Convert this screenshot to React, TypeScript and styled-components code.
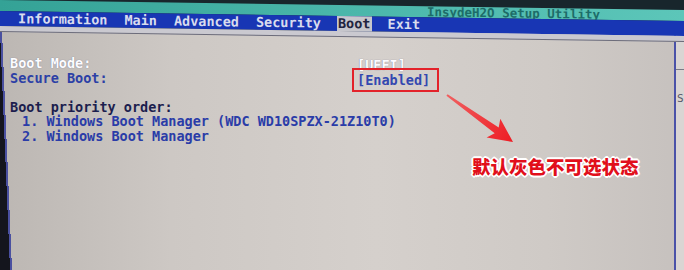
import React from 'react'
import styled, { createGlobalStyle } from 'styled-components'

const GlobalStyle = createGlobalStyle`
  html, body {
    margin: 0;
    padding: 0;
    background: #18262c;
    overflow: hidden;
  }
`

const Screen = styled.div`
  position: relative;
  width: 684px;
  height: 270px;
  display: flex;
  flex-direction: column;
  overflow: hidden;
  font-family: "DejaVu Sans Mono", "Liberation Mono", monospace;
  font-weight: bold;
`

// the photo is a bit tilted, so the header leans down to the right
const Header = styled.div`
  transform: skewY(0.84deg);
  transform-origin: left top;
  display: flex;
  flex-direction: column;
  flex-shrink: 0;
`

const TitleBand = styled.div`
  height: 11px;
  background: linear-gradient(to right, #34a296, #4ab6aa 50%, #5cc6b9);
  display: flex;
  justify-content: flex-end;
  padding-right: 84px;
`

const Title = styled.span`
  font-size: 12.5px;
  line-height: 12px;
  color: #1d6c68;
`

const MenuBar = styled.div`
  height: 15px;
  background: #1836b4;
  display: flex;
  align-items: center;
  gap: 15px;
  padding-left: 17px;
`

const MenuItem = styled.span<{ $active?: boolean }>`
  font-size: 13.5px;
  line-height: 15px;
  padding: 0 1px;
  color: ${(p) => (p.$active ? '#22243e' : '#d9dcee')};
  background: ${(p) => (p.$active ? '#c6c6cc' : 'transparent')};
`

const HeaderGap = styled.div`
  height: 5px;
  background: #cac9d0;
  border-bottom: 1px solid #6c6c7a;
`

const Body = styled.div`
  flex: 1;
  display: flex;
  background: linear-gradient(to right, #bcb7b3, #cdc8c4 25%, #d5d0cc 55%, #cfcac6 80%, #c6c1be);
`

const Main = styled.div`
  flex: 1;
  padding: 24px 0 0 10px;
  background: linear-gradient(87.6deg, #14151d 0 10px, #4a50a0 10px 12px, transparent 12px);
  font-size: 13.5px;
  line-height: 14.5px;
`

const SettingRow = styled.div`
  display: grid;
  grid-template-columns: 347px auto;
`

const whiteText = 'color: #fcfcff; text-shadow: 0 0 1px rgba(40, 44, 100, 0.55);'

const Label = styled.span<{ $tone: 'white' | 'blue' | 'navy' }>`
  color: ${(p) => (p.$tone === 'blue' ? '#2c40a6' : '#1c1e4e')};
  ${(p) => p.$tone === 'white' && whiteText}
`

const Value = styled.span<{ $tone: 'white' | 'blue'; $marked?: boolean }>`
  justify-self: start;
  transform: translateY(2px);
  color: #3348b0;
  ${(p) => p.$tone === 'white' && whiteText}
  ${(p) =>
    p.$marked &&
    `
    padding-right: 4px;
    outline: 2px solid #e3222a;
    outline-offset: 3px;
  `}
`

const Blank = styled.div`
  height: 14.5px;
`

const ListItem = styled.div`
  margin-left: 12px;
  color: #2a3ca8;
  white-space: pre;
`

const Help = styled.div`
  width: 8px;
  border-left: 2px solid #4a52a8;
  background: #d9d5d3;
  font-size: 11px;
  font-weight: normal;
  color: #55586a;
`

const HelpTop = styled.div`
  height: 37px;
  border-bottom: 1px solid #7a7a86;
`

const HelpText = styled.div`
  padding: 22px 0 0 1px;
`

const Arrow = styled.svg`
  position: absolute;
  left: 0;
  top: 0;
  pointer-events: none;
`

const Note = styled.div`
  position: absolute;
  left: 472px;
  top: 155px;
  font-family: "Noto Sans CJK SC", sans-serif;
  font-size: 18.5px;
  font-weight: 900;
  line-height: 22px;
  color: #e10f1b;
  text-shadow:
    1px 0 #fff, -1px 0 #fff, 0 1px #fff, 0 -1px #fff,
    1px 1px #fff, -1px -1px #fff, 1px -1px #fff, -1px 1px #fff,
    2px 0 #fff, -2px 0 #fff, 0 2px #fff, 0 -2px #fff;
`

const tabs = ['Information', 'Main', 'Advanced', 'Security', 'Boot', 'Exit']

export default function App() {
  return (
    <>
      <GlobalStyle />
      <Screen>
        <Header>
          <TitleBand>
            <Title>InsydeH2O Setup Utility</Title>
          </TitleBand>
          <MenuBar>
            {tabs.map((t) => (
              <MenuItem key={t} $active={t === 'Boot'}>{t}</MenuItem>
            ))}
          </MenuBar>
          <HeaderGap />
        </Header>
        <Body>
          <Main>
            <SettingRow>
              <Label $tone="white">Boot Mode:</Label>
              <Value $tone="white">[UEFI]</Value>
            </SettingRow>
            <SettingRow>
              <Label $tone="blue">Secure Boot:</Label>
              <Value $tone="blue" $marked>[Enabled]</Value>
            </SettingRow>
            <Blank />
            <Label $tone="navy">Boot priority order:</Label>
            <ListItem>1. Windows Boot Manager (WDC WD10SPZX-21Z10T0)</ListItem>
            <ListItem>2. Windows Boot Manager</ListItem>
          </Main>
          <Help>
            <HelpTop />
            <HelpText>S</HelpText>
          </Help>
        </Body>
        <Arrow width="684" height="270" viewBox="0 0 684 270">
          <defs>
            <linearGradient id="arrowFill" x1="447" y1="95" x2="513" y2="142" gradientUnits="userSpaceOnUse">
              <stop offset="0" stopColor="#f06060" />
              <stop offset="1" stopColor="#ee1c24" />
            </linearGradient>
          </defs>
          <polygon
            points="446.4,95.8 494.7,133.3 486.6,137.6 513,142 500.3,118.8 498.7,127.5 447.6,94.2"
            fill="url(#arrowFill)"
          />
        </Arrow>
        <Note>默认灰色不可选状态</Note>
      </Screen>
    </>
  )
}
